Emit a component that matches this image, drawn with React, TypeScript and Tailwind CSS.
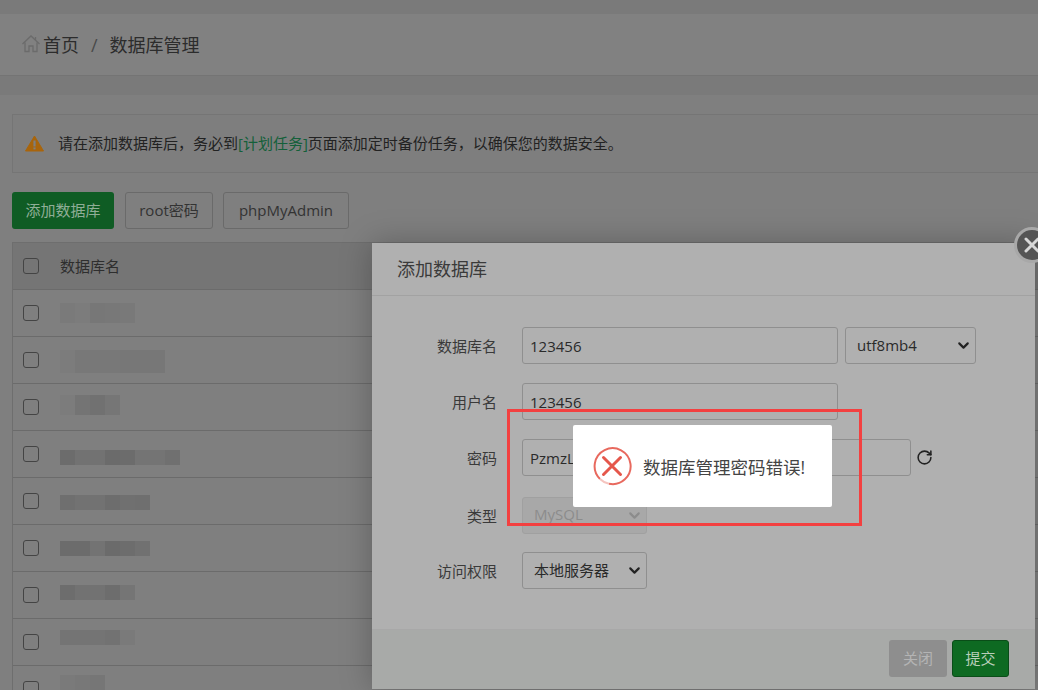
import { ChevronDown, RotateCw } from "lucide-react";

const FONT = "font-['Open_Sans','Noto_Sans_CJK_SC',sans-serif]";

const rows: { shift: string; h: string; cells: string[] }[] = [
  { shift: "mt-0", h: "h-[20px]", cells: ["#7a7a7a", "#7c7c7c", "#777777", "#787878", "#797979"] },
  { shift: "mt-[2px]", h: "h-[23px]", cells: ["#7c7c7c", "#787878", "#787878", "#787878", "#777777", "#777777", "#777777"] },
  { shift: "-mt-[4px]", h: "h-[20px]", cells: ["#7c7c7c", "#747474", "#717171", "#767676"] },
  { shift: "mt-[7px]", h: "h-[15px]", cells: ["#6c6c6c", "#727272", "#727272", "#6b6b6b", "#6c6c6c", "#747474", "#747474", "#707070"] },
  { shift: "mt-[3px]", h: "h-[15px]", cells: ["#6f6f6f", "#727272", "#727272", "#6d6d6d", "#707070", "#6f6f6f"] },
  { shift: "mt-0", h: "h-[15px]", cells: ["#6c6c6c", "#6c6c6c", "#737373", "#6b6b6b", "#6d6d6d", "#717171"] },
  { shift: "-mt-[5px]", h: "h-[15px]", cells: ["#6d6d6d", "#727272", "#727272", "#6d6d6d", "#757575"] },
  { shift: "-mt-[9px]", h: "h-[15px]", cells: ["#747474", "#747474", "#747474", "#727272", "#7a7a7a"] },
  { shift: "-mt-[13px]", h: "h-[15px]", cells: ["#7a7a7a", "#787878", "#767676"] },
];

function Check() {
  return <span className="block w-[16px] h-[16px] rounded-[3px] border border-[#444444] shrink-0" />;
}

function Field({ label, extra, children }: { label: string; extra?: string; children: React.ReactNode }) {
  return (
    <div className={`flex items-center ${extra ?? ""}`}>
      <span className="w-[125px] text-right text-[15px] text-[#3a3a3a] mt-[2px]">{label}</span>
      <div className="ml-[25px] flex items-center">{children}</div>
    </div>
  );
}

function Box({ w, text, dim }: { w: string; text: string; dim?: boolean }) {
  return (
    <div className={`${w} h-[37px] rounded-[3px] border flex items-center justify-between pl-[11px] pr-[3px] text-[15px] ${dim ? "text-[#8c8c8c] border-[#a0a0a0] bg-[#a8a8a8]" : "text-[#2a2a2a] border-[#8f8f8f]"}`}>
      <span className={dim ? "-mt-[2px]" : ""}>{text}</span>
      <ChevronDown size={17} strokeWidth={3} className={dim ? "text-[#8c8c8c]" : "text-[#222222]"} />
    </div>
  );
}

function Input({ w, text }: { w: string; text: string }) {
  return (
    <div className={`${w} h-[37px] rounded-[3px] border border-[#8f8f8f] flex items-center pl-[7px] pt-[2px] text-[15px] text-[#2a2a2a]`}>
      {text}
    </div>
  );
}

export default function App() {
  return (
    <div className={`${FONT} relative w-[1038px] h-[690px] overflow-hidden bg-[#7a7a7a]`}>
      <div className="h-[14px]" />
      <div className="h-[62px] bg-[#818181] border-b border-[#747474] flex items-center pl-[21px] text-[18px] text-[#2c2c2c]">
        <svg width="20" height="20" viewBox="0 0 20 20" fill="none" stroke="#6b6b6b" strokeWidth="1.3" className="mb-[2px]">
          <path d="M1.5 10 L10 2 L18.5 10" />
          <path d="M4 8.5 V17.5 H8 V12 H12 V17.5 H16 V8.5" />
          <path d="M14.5 3 V6" />
        </svg>
        <span className="ml-[2px] mt-[2px]">首页</span>
        <span className="ml-[12px] mr-[12px] text-[#4a4a4a] mt-[2px]">/</span>
        <span className="mt-[2px]">数据库管理</span>
      </div>
      <div className="h-[19px]" />
      <div className="bg-[#7f7f7f] h-[595px]">
        <div className="pt-[19px] pl-[12px]">
          <div className="h-[59px] w-[1040px] border border-[#757575] bg-[#7e7e7e] flex items-center pl-[12px] text-[15px] text-[#222222]">
            <svg width="19" height="17" viewBox="0 0 19 17">
              <path d="M9.5 1 L18.5 16 H0.5 Z" fill="#a8650c" stroke="#a8650c" strokeLinejoin="round" />
              <rect x="8.4" y="5.5" width="2.2" height="6" fill="#7f7f7f" />
              <rect x="8.4" y="12.4" width="2.2" height="2" fill="#7f7f7f" />
            </svg>
            <span className="ml-[14px]">
              请在添加数据库后，务必到<span className="text-[#14603a]">[计划任务]</span>页面添加定时备份任务，以确保您的数据安全。
            </span>
          </div>
          <div className="flex mt-[19px]">
            <div className="w-[102px] h-[37px] rounded-[3px] bg-[#0f5c24] flex items-center justify-center text-[15px] text-[#8fae97]">添加数据库</div>
            <div className="ml-[11px] w-[88px] h-[37px] rounded-[3px] border border-[#6a6a6a] flex items-center justify-center text-[15px] text-[#333333]">root密码</div>
            <div className="ml-[10px] w-[126px] h-[37px] rounded-[3px] border border-[#6a6a6a] flex items-center justify-center text-[15px] text-[#333333]">phpMyAdmin</div>
          </div>
          <div className="mt-[13px] w-[1040px] border border-[#6e6e6e]">
            <div className="h-[47px] bg-[#757575] border-b border-[#6b6b6b] flex items-center pl-[10px]">
              <Check />
              <span className="ml-[21px] text-[15px] text-[#2e2e2e]">数据库名</span>
            </div>
            {rows.map((r, i) => (
              <div key={i} className="h-[47px] border-b border-[#6b6b6b] flex items-center pl-[10px]">
                <Check />
                <div className={`ml-[21px] flex ${r.h} ${r.shift}`}>
                  {r.cells.map((c, j) => (
                    <span key={j} className="block w-[15px] h-full" style={{ backgroundColor: c }} />
                  ))}
                </div>
              </div>
            ))}
          </div>
        </div>
      </div>

      {/* modal */}
      <div className="absolute left-[372px] top-[243px] w-[663px] h-[446px] bg-[#b0b0b0] shadow-[0_0_30px_rgba(0,0,0,0.25)] flex flex-col">
        <div className="h-[53px] border-b border-[#a2a2a2] flex items-center pl-[25px] text-[18px] text-[#3a3a3a]">添加数据库</div>
        <div className="flex-1 pt-[31px] flex flex-col gap-[19px]">
          <Field label="数据库名">
            <Input w="w-[316px]" text="123456" />
            <div className="ml-[7px]"><Box w="w-[131px]" text="utf8mb4" /></div>
          </Field>
          <Field label="用户名">
            <Input w="w-[316px]" text="123456" />
          </Field>
          <Field label="密码">
            <Input w="w-[389px]" text="PzmzL" />
            <RotateCw size={17} strokeWidth={2.2} className="ml-[5px] text-[#222222] -mt-[1px]" />
          </Field>
          <Field label="类型" extra="mt-[2px]">
            <Box w="w-[125px]" text="MySQL" dim />
          </Field>
          <Field label="访问权限" extra="-mt-[1px]">
            <Box w="w-[125px]" text="本地服务器" />
          </Field>
        </div>
        <div className="h-[60px] border-t border-[#a8a8a8] bg-[#a8aaa8] flex justify-end items-start pt-[10px] gap-[5px] pr-[26px]">
          <div className="w-[58px] h-[37px] rounded-[3px] bg-[#8e8e8e] flex items-center justify-center text-[15px] text-[#b4b4b4]">关闭</div>
          <div className="w-[57px] h-[37px] rounded-[3px] bg-[#0e6a22] border border-[#0a4d18] flex items-center justify-center text-[15px] text-[#b9ceb9]">提交</div>
        </div>
      </div>

      {/* close button */}
      <div className="absolute left-[1014px] top-[227px] w-[36px] h-[36px] rounded-full bg-[#555555] border-[3px] border-[#a8a8a8] flex items-center justify-center">
        <svg width="18" height="18" viewBox="0 0 18 18" stroke="#d8d8d8" strokeWidth="3" strokeLinecap="round">
          <path d="M3 3 L15 15 M15 3 L3 15" />
        </svg>
      </div>

      {/* annotation box */}
      <div className="absolute left-[507px] top-[409px] w-[355px] h-[117px] border-[3px] border-[#f34040]" />

      {/* toast */}
      <div className="absolute left-[573px] top-[425px] w-[259px] h-[82px] rounded-[2px] bg-white flex items-center pl-[19px]">
        <svg width="40" height="40" viewBox="0 0 40 40" fill="none" className="shrink-0">
          <path d="M8 33 A18 18 0 1 1 17 37.8" stroke="#e8695e" strokeWidth="2" />
          <path d="M8 33 A18 18 0 0 0 17 37.8" stroke="#f5c4bf" strokeWidth="2" />
          <path d="M11.5 11.5 L28.5 28.5 M28.5 11.5 L11.5 28.5" stroke="#e5574b" strokeWidth="3" strokeLinecap="round" />
        </svg>
        <span className="ml-[11px] text-[17.5px] text-[#444444] mt-[2px]">数据库管理密码错误!</span>
      </div>
    </div>
  );
}
